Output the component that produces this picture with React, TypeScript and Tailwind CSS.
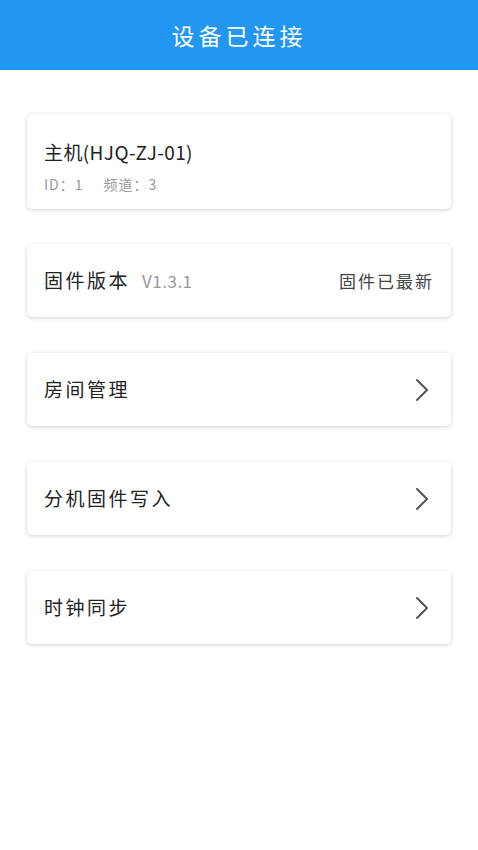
import React from "react";

const Chevron = () => (
  <svg width="16" height="26" viewBox="0 0 16 26" fill="none" className="mr-[4px]">
    <path d="M3 3 L13 13 L3 23" stroke="#555555" strokeWidth="2" strokeLinecap="round" strokeLinejoin="round" />
  </svg>
);

const Card = ({ children, className = "" }: { children: React.ReactNode; className?: string }) => (
  <div className={`mx-[27px] rounded-[5px] bg-white shadow-[0_1px_4px_rgba(0,0,0,0.18)] ${className}`}>{children}</div>
);

export default function App() {
  const font = { fontFamily: '"Noto Sans CJK SC", "Open Sans", sans-serif' };
  return (
    <div className="min-h-[850px] bg-white" style={font}>
      <div className="flex h-[70px] items-center justify-center bg-[#2196f3]">
        <span className="text-[23px] tracking-[4px] text-white">设备已连接</span>
      </div>
      <div className="flex flex-col gap-[36px] pt-[44px]">
        <Card className="flex h-[95px] flex-col px-[17px] pt-[25px]">
          <div className="text-[19px] leading-[26px] tracking-[0.4px] text-[#222]">主机(HJQ-ZJ-01)</div>
          <div className="mt-[10px] flex text-[14px] leading-[18px] tracking-[1px] text-[#999]">
            <span>ID：1</span>
            <span className="ml-[20px]">频道：3</span>
          </div>
        </Card>
        <Card className="mt-[-1px] flex h-[73px] items-center justify-between px-[17px]">
          <div className="flex items-center">
            <span className="text-[19px] tracking-[2.5px] text-[#222]">固件版本</span>
            <span className="ml-[12px] text-[17px] tracking-[0.5px] text-[#999]">V1.3.1</span>
          </div>
          <span className="text-[17px] tracking-[2px] text-[#444]">固件已最新</span>
        </Card>
        {["房间管理", "分机固件写入", "时钟同步"].map((t) => (
          <Card key={t} className="flex h-[73px] items-center justify-between px-[17px]">
            <span className="text-[19px] tracking-[2.5px] text-[#222]">{t}</span>
            <Chevron />
          </Card>
        ))}
      </div>
    </div>
  );
}
